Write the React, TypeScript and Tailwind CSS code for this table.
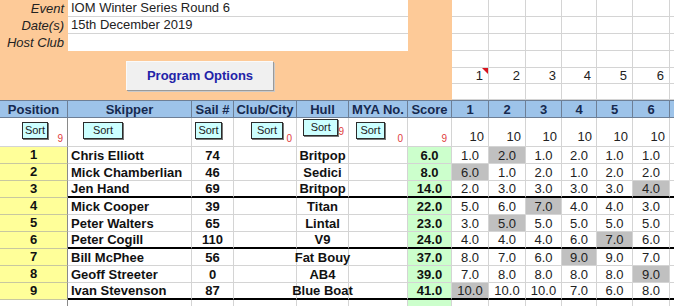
import React from "react";

type Row = {
  pos: number;
  name: string;
  sail: string;
  hull: string;
  score: string;
  races: string[];
  drop: number;
};

const rows: Row[] = [
  { pos: 1, name: "Chris Elliott", sail: "74", hull: "Britpop", score: "6.0", races: ["1.0", "2.0", "1.0", "2.0", "1.0", "1.0"], drop: 1 },
  { pos: 2, name: "Mick Chamberlian", sail: "46", hull: "Sedici", score: "8.0", races: ["6.0", "1.0", "2.0", "1.0", "2.0", "2.0"], drop: 0 },
  { pos: 3, name: "Jen Hand", sail: "69", hull: "Britpop", score: "14.0", races: ["2.0", "3.0", "3.0", "3.0", "3.0", "4.0"], drop: 5 },
  { pos: 4, name: "Mick Cooper", sail: "39", hull: "Titan", score: "22.0", races: ["5.0", "6.0", "7.0", "4.0", "4.0", "3.0"], drop: 2 },
  { pos: 5, name: "Peter Walters", sail: "65", hull: "Lintal", score: "23.0", races: ["3.0", "5.0", "5.0", "5.0", "5.0", "5.0"], drop: 1 },
  { pos: 6, name: "Peter Cogill", sail: "110", hull: "V9", score: "24.0", races: ["4.0", "4.0", "4.0", "6.0", "7.0", "6.0"], drop: 4 },
  { pos: 7, name: "Bill McPhee", sail: "56", hull: "Fat Bouy", score: "37.0", races: ["8.0", "7.0", "6.0", "9.0", "9.0", "7.0"], drop: 3 },
  { pos: 8, name: "Geoff Streeter", sail: "0", hull: "AB4", score: "39.0", races: ["7.0", "8.0", "8.0", "8.0", "8.0", "9.0"], drop: 5 },
  { pos: 9, name: "Ivan Stevenson", sail: "87", hull: "Blue Boat", score: "41.0", races: ["10.0", "10.0", "10.0", "7.0", "6.0", "8.0"], drop: 0 },
];

const raceWidths = ["w-[37px]", "w-[37px]", "w-[36px]", "w-[35px]", "w-[36px]", "w-[37px]", "w-[30px]"];
const topHeights = ["h-[17px]", "h-[17px]", "h-[17px]", "h-[17px]", "h-[16px]", "h-[16px]"];

const gridCols =
  "grid grid-cols-[68px_124px_42px_63px_52px_59px_44px_37px_37px_36px_35px_36px_37px_30px]";

function SortBtn({ w, mt = "mt-[4px]", ml }: { w: string; mt?: string; ml: string }) {
  return (
    <div
      className={`${w} ${mt} ${ml} h-[17px] bg-[#ccffff] border border-[#2b2b2b] shadow-[1px_1px_0_#777] flex items-center justify-center text-[11px] text-[#222] leading-none`}
    >
      Sort
    </div>
  );
}

export default function App() {
  const head = "h-[18px] bg-[#9dc3e9] border-r border-b border-t border-[#6d7f96] font-bold text-[13px] text-[#15294f] flex items-center justify-center leading-none whitespace-nowrap";
  const sortCell = "h-[29px] bg-white border-r border-b border-[#d4d4d4] flex";
  const red = "ml-auto self-end mb-[2px] mr-[4px] text-[10px] text-[#e03c3c] leading-none";

  return (
    <div className="w-[674px] h-[306px] overflow-hidden bg-white font-['Liberation_Sans',Arial,sans-serif] text-[#111]">
      {/* top block */}
      <div className="flex h-[100px]">
        <div className="w-[452px] shrink-0 bg-[#fdca98] flex flex-col">
          {[
            ["Event", "IOM Winter Series Round 6"],
            ["Date(s)", "15th December 2019"],
            ["Host Club", ""],
          ].map(([label, value], i) => (
            <div key={label} className="flex h-[17px]">
              <div className="w-[68px] pr-[4px] text-right italic text-[13px] leading-[17px] text-[#222]">
                {label}
              </div>
              <div
                className={`w-[340px] bg-white pl-[3px] text-[13px] leading-[16px] text-[#222] ${
                  i < 2 ? "border-b border-[#d4d4d4]" : ""
                }`}
              >
                {value}
              </div>
            </div>
          ))}
          <div className="ml-[126px] mt-[10px] w-[147px] h-[29px] bg-[#f0f0f0] border-t border-l border-[#fafafa] shadow-[1px_1px_0_#9a9a9a,2px_2px_0_#c9c9c9] flex items-center justify-center font-bold text-[13px] text-[#2323a8]">
            Program Options
          </div>
        </div>
        <div className="flex flex-col">
          {topHeights.map((h, r) => (
            <div key={r} className={`flex ${h}`}>
              {raceWidths.map((w, c) => (
                <div
                  key={c}
                  className={`${w} relative shrink-0 border-r border-b border-[#d4d4d4] flex items-end justify-end pr-[5px] text-[13px] leading-none text-[#222]`}
                >
                  {r === 4 && c < 6 ? <span className="mb-[1px]">{c + 1}</span> : null}
                  {r === 4 && c === 0 ? (
                    <span className="absolute top-0 right-0 w-0 h-0 border-t-[6px] border-l-[6px] border-t-[#d8141e] border-l-transparent" />
                  ) : null}
                </div>
              ))}
            </div>
          ))}
        </div>
      </div>

      {/* table */}
      <div className={gridCols}>
        {["Position", "Skipper", "Sail #", "Club/City", "Hull", "MYA No.", "Score", "1", "2", "3", "4", "5", "6", ""].map(
          (t, i) => (
            <div key={i} className={head}>
              {t}
            </div>
          )
        )}

        {/* sort row */}
        <div className={`${sortCell} border-r-[#8a8a8a]`}>
          <SortBtn w="w-[26px]" ml="ml-[22px]" />
          <span className={red}>9</span>
        </div>
        <div className={sortCell}>
          <SortBtn w="w-[40px]" ml="ml-[15px]" />
        </div>
        <div className={sortCell}>
          <SortBtn w="w-[27px]" ml="ml-[3px]" />
        </div>
        <div className={sortCell}>
          <SortBtn w="w-[32px]" ml="ml-[17px]" />
          <span className={red}>0</span>
        </div>
        <div className={sortCell}>
          <SortBtn w="w-[39px]" ml="ml-[6px]" mt="mt-[1px]" />
          <span className={`${red} mb-[9px]`}>9</span>
        </div>
        <div className={sortCell}>
          <SortBtn w="w-[29px]" ml="ml-[7px]" />
          <span className={red}>0</span>
        </div>
        <div className={sortCell}>
          <span className={red}>9</span>
        </div>
        {[0, 1, 2, 3, 4, 5].map((c) => (
          <div key={c} className={`${sortCell} justify-end items-end pr-[4px] pb-[3px] text-[13px] leading-none text-[#222]`}>
            10
          </div>
        ))}
        <div className={sortCell} />

        {/* data rows */}
        {rows.map((r) => {
          const thick = r.pos % 3 === 0;
          const b = thick ? "border-b-2 border-b-black" : "border-b border-b-[#d4d4d4]";
          const cell = `h-[17px] border-r border-r-[#d4d4d4] ${b} text-[13px] leading-none flex items-center whitespace-nowrap`;
          return (
            <React.Fragment key={r.pos}>
              <div className="h-[17px] bg-[#ffff99] border-r border-r-[#8a8a8a] border-b border-b-[#c8c8a0] font-bold text-[13px] flex items-center justify-center">
                {r.pos}
              </div>
              <div className={`${cell} font-bold pl-[3px]`}>{r.name}</div>
              <div className={`${cell} font-bold justify-center`}>{r.sail}</div>
              <div className={cell} />
              <div className={`${cell} font-bold justify-center`}>{r.hull}</div>
              <div className={cell} />
              <div className={`${cell} bg-[#ccffcc] font-bold justify-center`}>{r.score}</div>
              {r.races.map((v, i) => (
                <div
                  key={i}
                  className={`${cell} justify-center text-[#222] ${i === r.drop ? "bg-[#c0c0c0]" : ""}`}
                >
                  {v}
                </div>
              ))}
              <div className={cell} />
            </React.Fragment>
          );
        })}

        {/* trailing empty row */}
        <div className="h-[6px] border-r border-[#8a8a8a]" />
        {Array.from({ length: 13 }).map((_, i) => (
          <div key={i} className={`h-[6px] border-r border-[#d4d4d4] ${i === 5 ? "bg-[#ccffcc]" : ""}`} />
        ))}
      </div>
    </div>
  );
}
